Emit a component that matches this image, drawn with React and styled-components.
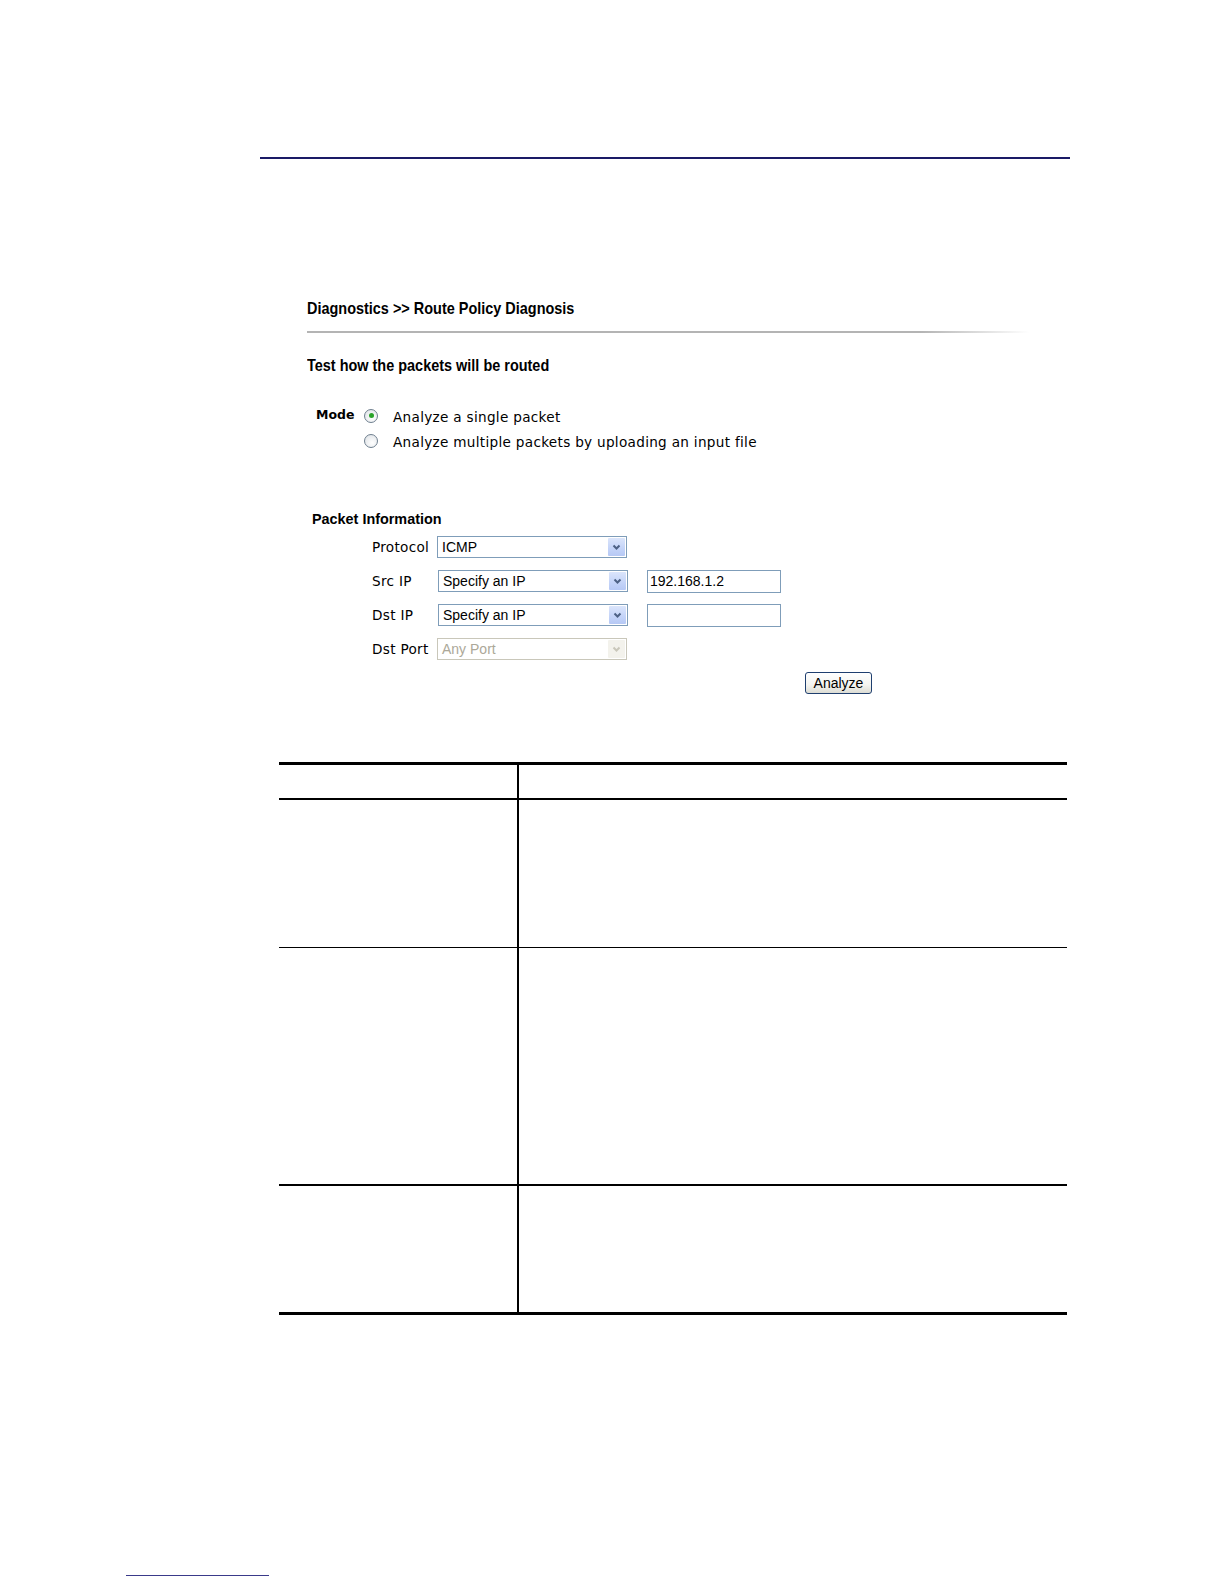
import React from "react";
import styled, { createGlobalStyle } from "styled-components";

const Global = createGlobalStyle`
  html, body { margin: 0; padding: 0; background: #fff; }
  body { font-family: "Liberation Sans", Arial, sans-serif; color: #000; }
`;

const Page = styled.div`
  width: 1224px;
  min-height: 1584px;
  padding-top: 157px;
  box-sizing: border-box;
`;

const TopRule = styled.div`
  margin-left: 260px;
  width: 810px;
  height: 2px;
  background: #1a1a66;
`;

const Panel = styled.div`
  margin-left: 307px;
  padding-top: 140px;
`;

const Heading = styled.div`
  font-family: "Liberation Sans Narrow", "Arial Narrow", "Liberation Sans", sans-serif;
  font-weight: bold;
  font-size: 17px;
  line-height: 20px;
  margin-top: ${(p) => p.$mt || 0}px;
  transform: scaleX(0.85);
  transform-origin: left center;
  white-space: nowrap;
`;

const FadeRule = styled.div`
  margin-top: 12px;
  width: 722px;
  height: 2px;
  background: linear-gradient(to right, #b4b4b4 0%, #b4b4b4 85%, #ffffff 100%);
`;

const ModeBlock = styled.div`
  margin-top: 28px;
  margin-left: 9px;
  display: flex;
  align-items: flex-start;
`;

const ModeLabel = styled.div`
  font-family: "DejaVu Sans", Verdana, sans-serif;
  font-weight: bold;
  font-size: 12.5px;
  line-height: 25px;
  width: 48px;
  margin-top: -2px;
`;

const RadioList = styled.div`
  display: flex;
  flex-direction: column;
`;

const RadioRow = styled.label`
  display: flex;
  align-items: center;
  height: 25.5px;
  font-family: "DejaVu Sans", Verdana, sans-serif;
  font-size: 13.6px;
  letter-spacing: 0.3px;
  gap: 15px;
`;

const Radio = styled.span`
  width: 12px;
  height: 12px;
  border-radius: 50%;
  border: 1px solid #6f7f8f;
  background: radial-gradient(circle at 60% 65%, #ffffff 0%, #e6e9ec 70%, #cfd5da 100%);
  display: flex;
  align-items: center;
  justify-content: center;
  margin-top: ${(p) => p.$mt || 0}px;
  &::after {
    content: "";
    display: ${(p) => (p.$checked ? "block" : "none")};
    width: 5px;
    height: 5px;
    border-radius: 50%;
    background: #2aa32a;
  }
`;

const SectionTitle = styled.div`
  margin-top: 55px;
  margin-left: 5px;
  font-family: "Liberation Sans", Arial, sans-serif;
  font-weight: bold;
  font-size: 14.4px;
  line-height: 18px;
`;

const Form = styled.div`
  margin-top: 2px;
  margin-left: 65px;
  display: flex;
  flex-direction: column;
`;

const FormRow = styled.div`
  display: flex;
  align-items: center;
  height: 34px;
`;

const FieldLabel = styled.div`
  width: 65px;
  font-family: "DejaVu Sans", Verdana, sans-serif;
  font-size: 13.6px;
  letter-spacing: 0.3px;
`;

const SelectBox = styled.div`
  width: 190px;
  height: 22px;
  box-sizing: border-box;
  border: 1px solid ${(p) => (p.$disabled ? "#c9c7ba" : "#7f9db9")};
  background: #fff;
  display: flex;
  align-items: stretch;
  font-family: "Liberation Sans", Arial, sans-serif;
  font-size: 14px;
  color: ${(p) => (p.$disabled ? "#aca899" : "#000")};
  margin-left: ${(p) => p.$ml || 0}px;
`;

const SelectText = styled.div`
  flex: 1;
  display: flex;
  align-items: center;
  padding-left: 4px;
`;

const SelectButton = styled.div`
  width: 17px;
  margin: 1px;
  display: flex;
  align-items: center;
  justify-content: center;
  background: ${(p) =>
    p.$disabled
      ? "#f3f2ec"
      : "linear-gradient(to bottom, #dbe5fb 0%, #c3d3f8 60%, #b6c8f5 100%)"};
  border-radius: 1px;
`;

const TextInput = styled.div`
  margin-left: 19px;
  width: 134px;
  height: 23px;
  box-sizing: border-box;
  border: 1px solid #7f9db9;
  background: #fff;
  font-family: "Liberation Sans", Arial, sans-serif;
  font-size: 14px;
  display: flex;
  align-items: center;
  padding-left: 2px;
`;

const ButtonRow = styled.div`
  margin-top: 6px;
  margin-left: 498px;
`;

const Button = styled.button`
  width: 67px;
  height: 22px;
  padding: 0;
  border: 1px solid #1f3f6f;
  border-radius: 3px;
  background: linear-gradient(to bottom, #ffffff 0%, #f4f4f0 60%, #dcdcd4 100%);
  font-family: "Liberation Sans", Arial, sans-serif;
  font-size: 14px;
  color: #000;
`;

const Table = styled.table`
  margin-top: 68px;
  margin-left: 279px;
  width: 788px;
  border-collapse: collapse;
  border-top: 3px solid #000;
  border-bottom: 3px solid #000;
`;

const Row = styled.tr`
  height: ${(p) => p.$h}px;
  border-bottom: ${(p) => p.$bw || 0}px solid #000;
`;

const LeftCell = styled.td`
  width: 238px;
  padding: 0;
  border-right: 2px solid #000;
`;

const RightCell = styled.td`
  padding: 0;
`;

const FooterRule = styled.div`
  margin-top: 260px;
  margin-left: 126px;
  width: 143px;
  height: 1px;
  background: #3a3a8a;
`;

const Chevron = ({ disabled }) => (
  <svg width="9" height="7" viewBox="0 0 9 7">
    <polyline
      points="1.5,1.5 4.5,4.5 7.5,1.5"
      fill="none"
      stroke={disabled ? "#c9c7ba" : "#4d6185"}
      strokeWidth="2"
    />
  </svg>
);

const Select = ({ value, disabled, ml }) => (
  <SelectBox $disabled={disabled} $ml={ml}>
    <SelectText>{value}</SelectText>
    <SelectButton $disabled={disabled}>
      <Chevron disabled={disabled} />
    </SelectButton>
  </SelectBox>
);

export default function App() {
  return (
    <Page>
      <Global />
      <TopRule />
      <Panel>
        <Heading>Diagnostics &gt;&gt; Route Policy Diagnosis</Heading>
        <FadeRule />
        <Heading $mt={23}>Test how the packets will be routed</Heading>
        <ModeBlock>
          <ModeLabel>Mode</ModeLabel>
          <RadioList>
            <RadioRow>
              <Radio $checked $mt={-2} />
              Analyze a single packet
            </RadioRow>
            <RadioRow>
              <Radio $mt={-2} />
              Analyze multiple packets by uploading an input file
            </RadioRow>
          </RadioList>
        </ModeBlock>
        <SectionTitle>Packet Information</SectionTitle>
        <Form>
          <FormRow>
            <FieldLabel>Protocol</FieldLabel>
            <Select value="ICMP" />
          </FormRow>
          <FormRow>
            <FieldLabel>Src IP</FieldLabel>
            <Select value="Specify an IP" ml={1} />
            <TextInput>192.168.1.2</TextInput>
          </FormRow>
          <FormRow>
            <FieldLabel>Dst IP</FieldLabel>
            <Select value="Specify an IP" ml={1} />
            <TextInput />
          </FormRow>
          <FormRow>
            <FieldLabel>Dst Port</FieldLabel>
            <Select value="Any Port" disabled />
          </FormRow>
        </Form>
        <ButtonRow>
          <Button>Analyze</Button>
        </ButtonRow>
      </Panel>
      <Table>
        <tbody>
          <Row $h={35} $bw={2}>
            <LeftCell />
            <RightCell />
          </Row>
          <Row $h={149} $bw={1}>
            <LeftCell />
            <RightCell />
          </Row>
          <Row $h={237} $bw={2}>
            <LeftCell />
            <RightCell />
          </Row>
          <Row $h={129}>
            <LeftCell />
            <RightCell />
          </Row>
        </tbody>
      </Table>
      <FooterRule />
    </Page>
  );
}
